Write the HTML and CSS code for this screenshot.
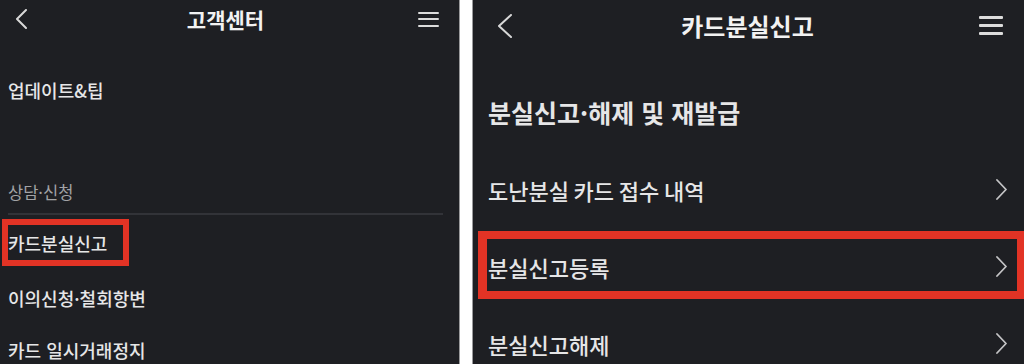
FILE: index.html
```html
<!DOCTYPE html>
<html lang="ko">
<head>
    <meta charset="UTF-8">
    <meta name="viewport" content="width=device-width, initial-scale=1.0">
    <title>고객센터 - 카드분실신고</title>
    <link rel="stylesheet" href="styles.css">
</head>
<body>
    <div class="shots">
        <!-- left: customer center menu -->
        <section class="screen screen-left">
            <header class="topbar">
                <span class="back">
                    <svg width="12" height="20" viewBox="0 0 12 20"><path d="M11 1 L2 10 L11 19"/></svg>
                </span>
                <h1 class="title">고객센터</h1>
                <span class="menu"><i></i><i></i><i></i></span>
            </header>

            <div class="link-update">업데이트&amp;팁</div>

            <div class="group-title">상담·신청</div>
            <ul class="menu-list">
                <li class="menu-item">카드분실신고<span class="mark"></span></li>
                <li class="menu-item">이의신청·철회항변</li>
                <li class="menu-item">카드 일시거래정지</li>
            </ul>
        </section>

        <div class="gap"></div>

        <!-- right: lost card report -->
        <section class="screen screen-right">
            <header class="topbar">
                <span class="back">
                    <svg width="15" height="24" viewBox="0 0 15 24"><path d="M14 1 L2 12 L14 23"/></svg>
                </span>
                <h1 class="title">카드분실신고</h1>
                <span class="menu"><i></i><i></i><i></i></span>
            </header>

            <h2 class="heading">분실신고·해제 및 재발급</h2>

            <ul class="row-list">
                <li class="row">
                    <span>도난분실 카드 접수 내역</span>
                    <svg class="chev" width="11" height="21" viewBox="0 0 11 21"><path d="M1 1 L10 10.5 L1 20"/></svg>
                </li>
                <li class="row">
                    <span>분실신고등록</span>
                    <svg class="chev" width="11" height="21" viewBox="0 0 11 21"><path d="M1 1 L10 10.5 L1 20"/></svg>
                    <span class="mark"></span>
                </li>
                <li class="row">
                    <span>분실신고해제</span>
                    <svg class="chev" width="11" height="21" viewBox="0 0 11 21"><path d="M1 1 L10 10.5 L1 20"/></svg>
                </li>
            </ul>
        </section>
    </div>
</body>
</html>
```

FILE: styles.css
```css
body {
    margin: 0;
    background-color: #fff;
    font-family: "Noto Sans CJK KR", "Noto Sans", sans-serif;
    color: #e6e6e7;
}

.shots {
    display: flex;
    height: 364px;
    overflow: hidden;
}

.screen {
    background-color: #1e1f23;
    height: 364px;
    overflow: hidden;
    box-sizing: border-box;
}

.gap {
    width: 14px;
    background-color: #fff;
    border-left: 1px solid #9a9a9c;
    border-right: 1px solid #9a9a9c;
    box-sizing: border-box;
}

ul {
    list-style: none;
    margin: 0;
    padding: 0;
}

.topbar {
    display: grid;
    grid-template-columns: 1fr auto 1fr;
    align-items: center;
}

.title {
    margin: 0;
    font-weight: bold;
    color: #f2f2f2;
}

.back svg,
.chev {
    display: block;
    fill: none;
    stroke-linecap: round;
    stroke-linejoin: round;
}

.back svg {
    stroke: #d8d8d8;
    stroke-width: 2;
}

.menu {
    justify-self: end;
    display: flex;
    flex-direction: column;
}

.menu i {
    display: block;
    background-color: #dcdcdc;
    border-radius: 1px;
}

.mark {
    position: absolute;
    border: solid #e23325;
}

/* left screen */
.screen-left {
    width: 459px;
    padding: 0 16px 0 8px;
}

.screen-left .topbar {
    height: 38px;
}

.screen-left .back {
    margin-left: 7px;
}

.screen-left .title {
    font-size: 21px;
    line-height: 26px;
}

.screen-left .menu {
    gap: 4.5px;
    margin-right: 4px;
}

.screen-left .menu i {
    width: 21px;
    height: 2px;
}

.link-update {
    margin-top: 40px;
    font-size: 18px;
    font-weight: 500;
    line-height: 24px;
}

.group-title {
    margin-top: 79px;
    padding-bottom: 10px;
    border-bottom: 2px solid #323338;
    font-size: 16.5px;
    line-height: 22px;
    color: #a2a3a6;
}

.menu-item {
    position: relative;
    height: 55px;
    display: flex;
    align-items: center;
    font-size: 18px;
    font-weight: 500;
}

.menu-item:last-child {
    height: 40px;
    align-items: flex-end;
    padding-bottom: 2px;
    box-sizing: border-box;
}

.menu-item .mark {
    left: -6px;
    top: 4px;
    width: 127px;
    height: 47px;
    border-width: 6px;
    box-sizing: border-box;
}

/* right screen */
.screen-right {
    flex: 1;
    padding: 0 17px 0 15px;
}

.screen-right .topbar {
    height: 51px;
}

.screen-right .back {
    margin-left: 9px;
}

.screen-right .title {
    font-size: 24px;
    line-height: 30px;
}

.screen-right .menu {
    gap: 5px;
    margin-right: 4px;
}

.screen-right .menu i {
    width: 24px;
    height: 3px;
}

.heading {
    margin: 46px 0 0;
    font-size: 25px;
    font-weight: bold;
    line-height: 30px;
}

.row-list {
    margin-top: 24px;
}

.row {
    position: relative;
    height: 77px;
    display: flex;
    align-items: center;
    justify-content: space-between;
    font-size: 22px;
    font-weight: 500;
    word-spacing: -1.5px;
}

.chev {
    stroke: #c4c4c6;
    stroke-width: 1.8;
}

.row .mark {
    left: -10px;
    right: -18px;
    top: 3px;
    height: 68px;
    border-width: 8px 8px 8px 9px;
    box-sizing: border-box;
}
```
